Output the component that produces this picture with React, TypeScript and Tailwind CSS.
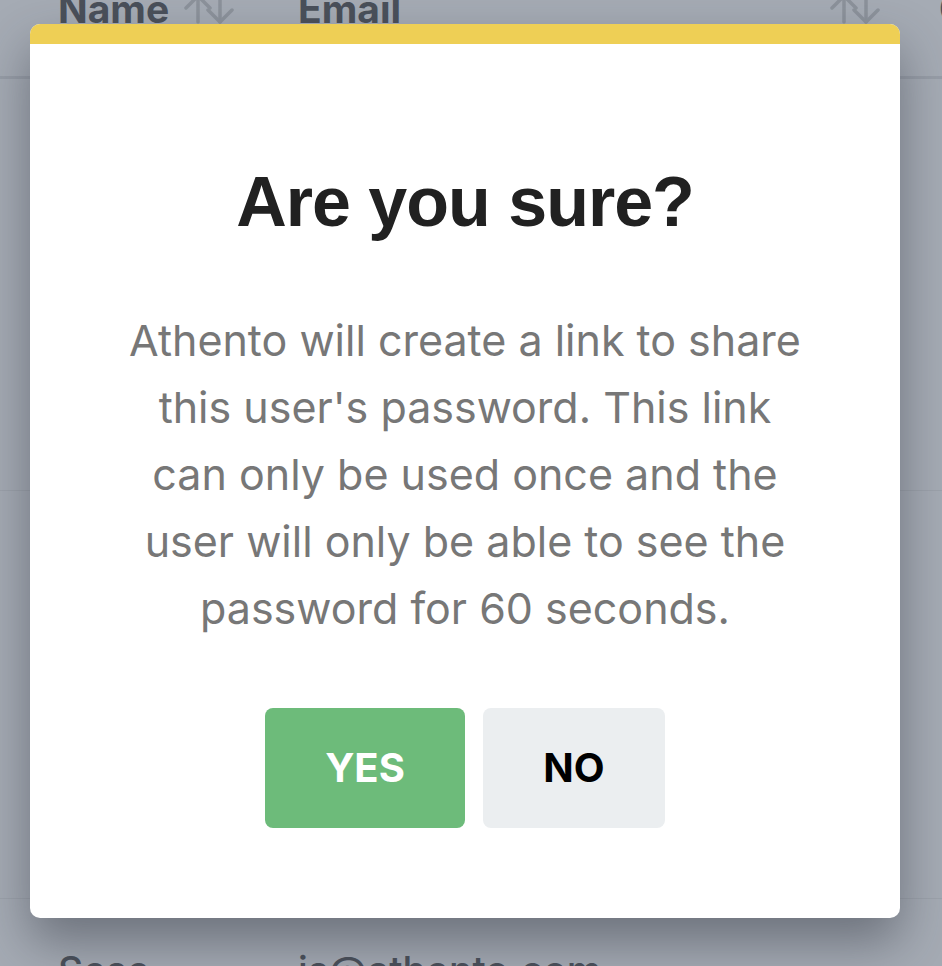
import React from 'react';

const SortIcon = ({ className = '' }: { className?: string }) => (
  <svg
    viewBox="0 0 52 30"
    width={52}
    height={30}
    fill="none"
    stroke="currentColor"
    strokeWidth={3.5}
    strokeLinecap="round"
    strokeLinejoin="round"
    className={className}
  >
    <path d="M15 2v26" />
    <path d="M3 14 15 2l12 12" />
    <path d="M37 2v26" />
    <path d="M25 16l12 12 12-12" />
  </svg>
);

export default function App() {
  return (
    <div className="relative w-[942px] h-[966px] overflow-hidden bg-[#a5abb4] font-['Inter',sans-serif]">
      {/* Table behind the overlay */}
      <div>
        <div className="flex items-start h-[79px] pl-[58px] border-b-[3px] border-[#979da7] text-[#4a505a]">
          <div className="flex items-start w-[240px] shrink-0 -mt-[11px]">
            <span className="text-[39px] leading-[39px] font-bold">Name</span>
            <SortIcon className="ml-[14px] mt-[5px] text-[#8c929b]" />
          </div>
          <div className="flex items-start w-[588px] shrink-0 -mt-[11px]">
            <span className="text-[39px] leading-[39px] font-bold">Email</span>
            <SortIcon className="ml-auto mr-[5px] mt-[5px] text-[#8c929b]" />
          </div>
          <span className="ml-[53px] -mt-[11px] shrink-0 text-[39px] leading-[39px] font-bold">Created</span>
        </div>
        <div className="h-[412px] border-b border-[#9ca2ab]" />
        <div className="h-[408px] border-b border-[#9ca2ab]" />
        <div className="flex pl-[58px] pt-[43px] text-[39px] font-medium text-[#4a505a]">
          <span className="w-[240px]">Sese</span>
          <span>js@athento.com</span>
        </div>
      </div>

      {/* Modal */}
      <div className="absolute left-[30px] top-[24px] w-[870px] h-[894px] bg-white rounded-[10px] overflow-hidden shadow-[0_24px_50px_rgba(40,45,55,0.45)] flex flex-col">
        <div className="h-[20px] bg-[#eecf55]" />
        <div className="flex flex-col items-center pt-[123px]">
          <h2 className="text-[70px] leading-none font-bold text-[#212121] font-['Liberation_Sans',Arial,sans-serif] tracking-[-1px]">
            Are you sure?
          </h2>
          <p className="mt-[70px] w-[690px] text-center text-[43px] leading-[67px] text-[#777777] font-['Inter',sans-serif]">
            Athento will create a link to share this user's password. This link can only be used once and the user will only be able to see the password for 60 seconds.
          </p>
          <div className="flex gap-[18px] mt-[66px]">
            <button className="w-[200px] h-[120px] rounded-[8px] bg-[#6dbb7a] text-white text-[40px] font-bold">
              YES
            </button>
            <button className="w-[182px] h-[120px] rounded-[8px] bg-[#ebeef0] text-black text-[40px] font-bold">
              NO
            </button>
          </div>
        </div>
      </div>
    </div>
  );
}
